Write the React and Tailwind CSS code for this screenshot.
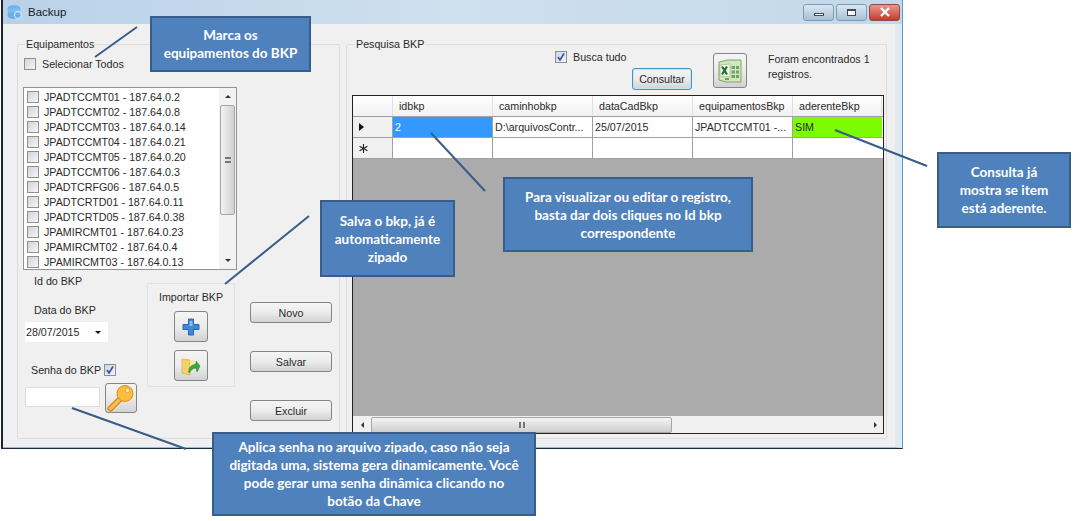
const EQUIP = [
  "JPADTCCMT01 - 187.64.0.2","JPADTCCMT02 - 187.64.0.8","JPADTCCMT03 - 187.64.0.14","JPADTCCMT04 - 187.64.0.21",
  "JPADTCCMT05 - 187.64.0.20","JPADTCCMT06 - 187.64.0.3","JPADTCRFG06 - 187.64.0.5","JPADTCRTD01 - 187.64.0.11",
  "JPADTCRTD05 - 187.64.0.38","JPAMIRCMT01 - 187.64.0.23","JPAMIRCMT02 - 187.64.0.4","JPAMIRCMT03 - 187.64.0.13",
];

function Check({ checked }) {
  return (
    <span className={`flex h-[12px] w-[12px] shrink-0 items-center justify-center border border-[#8e8f8f] bg-gradient-to-br ${checked ? "from-[#c9d6e6] to-[#f2f6fa]" : "from-[#d4d4d4] to-[#f6f6f6]"}`}>
      {checked && (
        <svg width="10" height="10" viewBox="0 0 10 10"><path d="M2 5l2 3 4-6.5" fill="none" stroke="#3d4f8f" strokeWidth="1.6" /></svg>
      )}
    </span>
  );
}

function Btn({ children, className = "" }) {
  return (
    <div className={`flex items-center justify-center rounded-[3px] border border-[#858585] bg-gradient-to-b from-[#f4f4f4] via-[#ececec] to-[#d2d2d2] ${className}`}>
      {children}
    </div>
  );
}

function Callout({ className, children }) {
  return (
    <div className={`absolute flex items-center justify-center border-2 border-[#385d8a] bg-[#4f81bd] text-center font-['Lato',sans-serif] text-[13.5px] font-bold leading-[18px] text-white ${className}`}>
      <div>{children}</div>
    </div>
  );
}

function Cell({ w, className = "", children }) {
  return (
    <div className={`flex shrink-0 items-center overflow-hidden whitespace-nowrap border-r border-[#a0a0a0] pl-[2px] ${w} ${className}`}>
      {children}
    </div>
  );
}

function Head({ w, children }) {
  return (
    <div className={`flex h-full shrink-0 items-center border-r border-[#e0e0e0] pl-[6px] ${w}`}>{children}</div>
  );
}

export default function App() {
  return (
    <div className="relative h-[521px] w-[1084px] overflow-hidden bg-white font-['Liberation_Sans',sans-serif] text-[10.7px] leading-[14px] text-[#2a2a2a]">
      {/* Window */}
      <div className="ml-[1px] flex h-[449px] w-[902px] flex-col border-b border-l-2 border-r border-b-[#1a2a3a] border-l-[#1c2530] border-r-[#5e9cc4] bg-[#f0f0f0]">
        {/* Title bar */}
        <div className="flex h-[24px] shrink-0 items-center bg-gradient-to-r from-[#b9d1e8] via-[#cfe0ef] to-[#c3d8ea] pl-[3px]">
          <svg width="18" height="18" viewBox="0 0 18 18">
            <ellipse cx="8" cy="5.5" rx="6.5" ry="3.5" fill="#6db4ec" />
            <rect x="1.5" y="5.5" width="13" height="7" fill="#7cbcef" />
            <ellipse cx="8" cy="12.5" rx="6.5" ry="3.5" fill="#6aaee6" />
            <circle cx="12" cy="12" r="3.5" fill="none" stroke="#c6e0f5" strokeWidth="1.3" />
          </svg>
          <span className="ml-[4px] text-[11.5px] text-[#1a1a1a]">Backup</span>
          <div className="ml-auto mr-[2px] flex gap-[2px]">
            <div className="flex h-[17px] w-[31px] items-end justify-center rounded-[3px] border border-[#7f9ab3] bg-gradient-to-b from-[#dbe7f2] to-[#a9c0d6] pb-[4px]">
              <div className="h-[3px] w-[10px] border border-[#3b4a5c] bg-white" />
            </div>
            <div className="flex h-[17px] w-[31px] items-center justify-center rounded-[3px] border border-[#7f9ab3] bg-gradient-to-b from-[#dbe7f2] to-[#a9c0d6]">
              <div className="h-[7px] w-[9px] border border-[#3b4a5c] border-t-2 bg-white" />
            </div>
            <div className="flex h-[17px] w-[31px] items-center justify-center rounded-[3px] border border-[#8e4a42] bg-gradient-to-b from-[#e8968c] to-[#c2392c]">
              <svg width="12" height="10" viewBox="0 0 12 10"><path d="M2 1l8 8M10 1l-8 8" stroke="#fff" strokeWidth="2.4" /></svg>
            </div>
          </div>
        </div>

        {/* Client */}
        <div className="flex flex-1 border-b border-r-[7px] border-b-[#7fc6d6] border-r-[#dfeaf3] pl-[14px] pt-[13px]">
          {/* Left group */}
          <fieldset className="h-[402px] w-[323px] shrink-0 rounded-[2px] border border-[#dcdcdc]">
            <legend className="ml-[7px] px-[1px]">Equipamentos</legend>
            <div className="ml-[6px] mt-[6px] flex items-center gap-[6px]">
              <Check />
              <span>Selecionar Todos</span>
            </div>
            {/* List */}
            <div className="ml-[5px] mt-[16px] flex h-[183px] w-[214px] border border-[#8f9499] bg-white">
              <div className="flex-1 pl-[2px] pt-[1px]">
                {EQUIP.map((e) => (
                  <div key={e} className="flex h-[15px] items-center gap-[5px] pl-[1px]">
                    <Check />
                    <span className="whitespace-nowrap">{e}</span>
                  </div>
                ))}
              </div>
              <div className="flex w-[17px] flex-col items-center bg-[#f2f2f2]">
                <div className="flex h-[17px] items-center"><div className="h-0 w-0 border-x-[3px] border-b-[3px] border-x-transparent border-b-[#333]" /></div>
                <div className="flex h-[110px] w-[15px] items-center justify-end rounded-[2px] border border-[#a8a8a8] bg-gradient-to-r from-[#f2f2f2] to-[#d0d0d0] pr-[3px]">
                  <div className="h-[6px] w-[6px] border-y-2 border-[#777]" />
                </div>
                <div className="mt-auto flex h-[17px] items-center"><div className="h-0 w-0 border-x-[3px] border-t-[3px] border-x-transparent border-t-[#333]" /></div>
              </div>
            </div>

            <div className="-mt-[1px] flex">
              {/* Id / data / senha */}
              <div className="w-[129px] shrink-0 pl-[7px]">
                <div className="ml-[9px] mt-[5px]">Id do BKP</div>
                <div className="ml-[9px] mt-[15px]">Data do BKP</div>
                <div className="mt-[5px] flex h-[20px] w-[83px] items-center justify-between bg-white pl-[1px] pr-[7px]">
                  <span>28/07/2015</span>
                  <div className="h-0 w-0 border-x-[3.5px] border-t-[3.5px] border-x-transparent border-t-[#111]" />
                </div>
                <div className="ml-[6px] mt-[21px] flex items-center gap-[3px]">
                  <span>Senha do BKP</span>
                  <Check checked />
                </div>
                <div className="mt-[6px] flex items-start gap-[5px]">
                  <div className="mt-[4px] h-[20px] w-[75px] border border-[#dedede] bg-white" />
                  <Btn className="h-[30px] w-[32px]">
                    <svg width="28" height="28" viewBox="0 0 28 28">
                      <path d="M3.5 24.5l11-11" stroke="#d9801a" strokeWidth="6" strokeLinecap="round" />
                      <path d="M3.5 24.5l11-11" stroke="#f8c04a" strokeWidth="3.4" strokeLinecap="round" />
                      <circle cx="18" cy="9.5" r="8" fill="#f8bf3f" stroke="#dc8a18" strokeWidth="1" />
                      <circle cx="20.5" cy="6.5" r="2.2" fill="#fdeeb8" stroke="#d98414" strokeWidth="0.6" />
                    </svg>
                  </Btn>
                </div>
              </div>

              {/* Importar */}
              <div className="mt-[14px] flex h-[104px] w-[88px] shrink-0 flex-col items-center border border-[#e2e2e2] pt-[6px]">
                <span>Importar BKP</span>
                <Btn className="mt-[7px] h-[31px] w-[34px]">
                  <svg width="18" height="18" viewBox="0 0 18 18">
                    <path d="M6.5 1h5v5.5H17v5h-5.5V17h-5v-5.5H1v-5h5.5z" fill="#3f8ad8" stroke="#2a66b0" strokeWidth="1" strokeLinejoin="round" />
                    <path d="M7.5 3h3v5h-3z" fill="#86bdf0" />
                  </svg>
                </Btn>
                <Btn className="mt-[8px] h-[31px] w-[34px]">
                  <svg width="20" height="20" viewBox="0 0 20 20">
                    <path d="M1 3l8 1v15l-8-2z" fill="#f2d367" stroke="#d4ac40" strokeWidth="0.7" />
                    <path d="M9 4h4v6H9z" fill="#f7e6a6" />
                    <path d="M8 17c-1-5 2-8 7-9V5l4 5-3 6-1-4c-3 0-5 2-7 5z" fill="#3aa83a" stroke="#1f7d1f" strokeWidth="0.5" />
                  </svg>
                </Btn>
              </div>

              {/* Buttons */}
              <div className="ml-[15px] mt-[33px] flex flex-col gap-[28px]">
                <Btn className="h-[21px] w-[82px]">Novo</Btn>
                <Btn className="h-[21px] w-[82px]">Salvar</Btn>
                <Btn className="h-[21px] w-[82px]">Excluir</Btn>
              </div>
            </div>
          </fieldset>

          {/* Right group */}
          <fieldset className="ml-[6px] h-[402px] w-[541px] shrink-0 rounded-[2px] border border-[#dcdcdc]">
            <legend className="ml-[8px] px-[1px]">Pesquisa BKP</legend>
            <div className="flex h-[44px]">
              <div className="ml-[208px] mt-[-1px] flex h-[14px] w-[72px] items-center gap-[6px]">
                <Check checked />
                <span className="whitespace-nowrap">Busca tudo</span>
              </div>
              <Btn className="ml-[5px] mt-[17px] h-[22px] w-[60px] !border-[#4a93c0] shadow-[inset_0_0_0_1px_#bfe3f5]">Consultar</Btn>
              <Btn className="ml-[21px] mt-[2px] h-[35px] w-[34px]">
                <svg width="26" height="26" viewBox="0 0 26 26">
                  <path d="M2 4l9-2h13v22H9l-7-2z" fill="#cfe6bf" stroke="#7da868" strokeWidth="1" />
                  <path d="M3 7l10-1v13l-10-1z" fill="#eef7e6" stroke="#7da868" strokeWidth="0.5" />
                  <path d="M5 8.5l5 8M10 8.5l-5 8" stroke="#2a6e3a" strokeWidth="2.2" />
                  <path d="M14.5 8h3.5v3h-3.5zM19 8h3v3h-3zM14.5 12.5h3.5v3h-3.5zM19 12.5h3v3h-3zM8 20h4v2H8zM14.5 17h3.5v3h-3.5zM19 17h3v3h-3z" fill="#6fa560" />
                </svg>
              </Btn>
              <div className="ml-[21px] mt-[1px] w-[110px] leading-[15px]">Foram encontrados 1 registros.</div>
            </div>

            {/* Grid */}
            <div className="ml-[5px] flex h-[339px] w-[532px] flex-col border border-[#222] bg-[#ababab]">
              <div className="flex h-[20px] shrink-0 bg-gradient-to-b from-white to-[#f1f1f1]">
                <Head w="w-[40px]" />
                <Head w="w-[100px]">idbkp</Head>
                <Head w="w-[100px]">caminhobkp</Head>
                <Head w="w-[100px]">dataCadBkp</Head>
                <Head w="w-[100px]">equipamentosBkp</Head>
                <Head w="w-[89px]">aderenteBkp</Head>
              </div>
              <div className="flex h-[22px] shrink-0 border-y border-[#a0a0a0] bg-white">
                <Cell w="w-[40px] justify-start bg-[#f0f0f0] !pl-[6px]">
                  <div className="h-0 w-0 border-y-[4px] border-l-[5px] border-y-transparent border-l-[#111]" />
                </Cell>
                <Cell w="w-[100px]" className="bg-[#3399ff] text-white">2</Cell>
                <Cell w="w-[100px]">D:\arquivosContr...</Cell>
                <Cell w="w-[100px]">25/07/2015</Cell>
                <Cell w="w-[100px]">JPADTCCMT01 -...</Cell>
                <Cell w="w-[89px]" className="bg-[#7cfc00] !border-r-0">SIM</Cell>
              </div>
              <div className="flex h-[21px] shrink-0 border-b border-[#a0a0a0] bg-white">
                <Cell w="w-[40px] bg-[#f0f0f0] !pl-[6px]">
                  <svg width="9" height="9" viewBox="0 0 9 9"><path d="M4.5 0v9M0.6 2.2l7.8 4.6M0.6 6.8l7.8-4.6" stroke="#222" strokeWidth="1.1" /></svg>
                </Cell>
                <Cell w="w-[100px]" />
                <Cell w="w-[100px]" />
                <Cell w="w-[100px]" />
                <Cell w="w-[100px]" />
                <Cell w="w-[89px]" className="!border-r-0" />
              </div>
              <div className="mt-auto flex h-[17px] shrink-0 items-center bg-[#f0f0f0]">
                <div className="flex w-[18px] justify-center"><div className="h-0 w-0 border-y-[3px] border-r-[3px] border-y-transparent border-r-[#333]" /></div>
                <div className="flex h-[16px] w-[301px] items-center justify-center rounded-[2px] border border-[#a8a8a8] bg-gradient-to-b from-[#f4f4f4] to-[#cfcfcf]">
                  <div className="h-[6px] w-[6px] border-x-2 border-[#777]" />
                </div>
                <div className="ml-auto flex w-[15px] justify-center"><div className="h-0 w-0 border-y-[3px] border-l-[3px] border-y-transparent border-l-[#333]" /></div>
              </div>
            </div>
          </fieldset>
        </div>
      </div>

      {/* Connector lines */}
      <svg className="pointer-events-none absolute left-0 top-0" width="1084" height="521">
        <g stroke="#385d8a" strokeWidth="2">
          <line x1="137" y1="27" x2="95" y2="57" />
          <line x1="309" y1="216" x2="225" y2="284" />
          <line x1="72" y1="408" x2="186" y2="449" />
          <line x1="431" y1="133" x2="485" y2="191" />
          <line x1="835" y1="130" x2="927" y2="166" />
        </g>
      </svg>

      {/* Callouts */}
      <Callout className="left-[150px] top-[16px] h-[56px] w-[161px]">Marca os<br />equipamentos do BKP</Callout>
      <Callout className="left-[320px] top-[200px] h-[77px] w-[135px]">Salva o bkp, já é<br />automaticamente<br />zipado</Callout>
      <Callout className="left-[503px] top-[177px] h-[75px] w-[250px]">Para visualizar ou editar o registro,<br />basta dar dois cliques no Id bkp<br />correspondente</Callout>
      <Callout className="left-[937px] top-[152px] h-[76px] w-[134px]">Consulta já<br />mostra se item<br />está aderente.</Callout>
      <Callout className="left-[212px] top-[432px] h-[84px] w-[324px]">Aplica senha no arquivo zipado, caso não seja<br />digitada uma, sistema gera dinamicamente. Você<br />pode gerar uma senha dinâmica clicando no<br />botão da Chave</Callout>
    </div>
  );
}
